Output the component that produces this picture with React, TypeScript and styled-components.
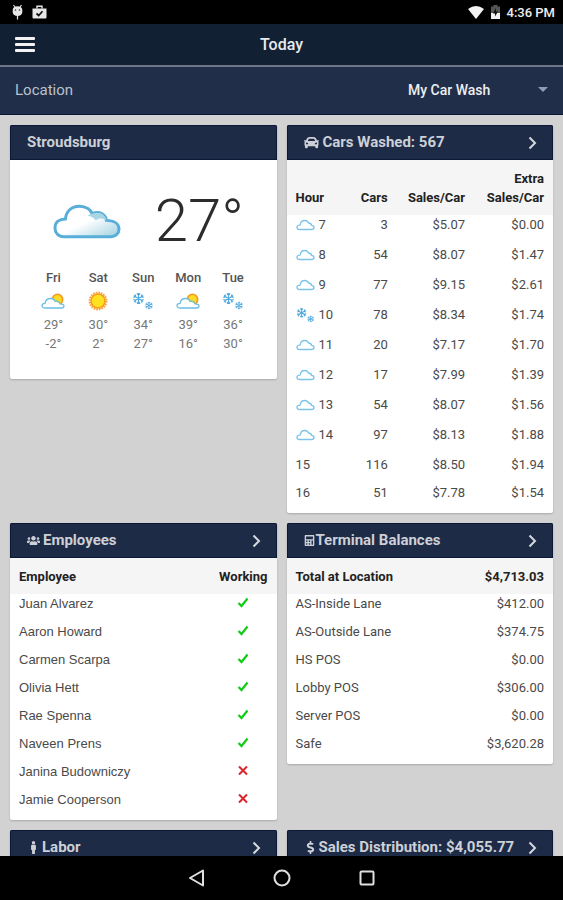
import React from "react";
import styled, { createGlobalStyle } from "styled-components";
import { FaCar, FaUsers, FaCalculator, FaMale, FaDollarSign } from "react-icons/fa";

const GlobalStyle = createGlobalStyle`
  * { box-sizing: border-box; }
  body { margin: 0; background: #000; font-family: Roboto, "Liberation Sans", sans-serif; color: #4a4a4a; }
`;

const Screen = styled.div`
  display: flex;
  flex-direction: column;
  height: 100vh;
`;

const StatusBar = styled.div`
  display: flex;
  flex: none;
  align-items: center;
  justify-content: space-between;
  height: 24px;
  padding: 0 8px 0 12px;
  background: #000;
  color: #eee;
  font-size: 13px;
  font-weight: 500;
`;

const StatusGroup = styled.div<{ $gap: number }>`
  display: flex;
  align-items: center;
  gap: ${(p) => p.$gap}px;
`;

const TitleBar = styled.header`
  display: grid;
  flex: none;
  grid-template-columns: 50px 1fr 50px;
  align-items: center;
  height: 43px;
  background: #122033;
  border-bottom: 2px solid #6c7686;
`;

const MenuButton = styled.button`
  display: flex;
  flex-direction: column;
  gap: 3px;
  width: 50px;
  padding: 12px 15px;
  border: 0;
  background: none;
`;

const MenuLine = styled.span`
  height: 3px;
  border-radius: 1px;
  background: #f2f2f2;
`;

const PageTitle = styled.h1`
  margin: 0;
  color: #e8eaed;
  font-size: 16px;
  font-weight: 500;
  line-height: 20px;
  text-align: center;
`;

const LocationBar = styled.div`
  display: flex;
  flex: none;
  align-items: center;
  justify-content: space-between;
  height: 48px;
  padding: 0 15px 2px;
  background: #202e4a;
  border-bottom: 1px solid #0b1433;
`;

const LocationLabel = styled.label`
  color: #bcc1ca;
  font-size: 15px;
`;

const SelectWrap = styled.div`
  display: flex;
  align-items: center;
  position: relative;
`;

const LocationSelect = styled.select`
  appearance: none;
  padding: 8px 57px 8px 0;
  border: 0;
  background: none;
  color: #eceef1;
  font: 500 14px Roboto, sans-serif;
`;

const Caret = styled.svg`
  position: absolute;
  right: 0;
  pointer-events: none;
`;

const Dashboard = styled.main`
  display: grid;
  flex: 1;
  grid-template-columns: 1fr 1fr;
  grid-auto-rows: max-content;
  align-items: start;
  gap: 10px;
  min-height: 0;
  padding: 10px;
  overflow-y: auto;
  scrollbar-width: none;
  background: #d2d2d2;
`;

const Card = styled.section`
  min-width: 0;
  padding-bottom: 2px;
  overflow: hidden;
  border-radius: 2px;
  background: #fff;
  box-shadow: 0 1px 2px rgba(0, 0, 0, 0.2);
`;

const CardTitle = styled.h2`
  margin: 0;
  color: #cdd0d6;
  font-size: 15px;
  font-weight: 700;
  line-height: 35px;
`;

const CardHeading = styled.div`
  display: flex;
  align-items: center;
  height: 35px;
  padding: 0 15px 0 16px;
  background: #1d2b47;
  border: 1px solid #0d1738;
`;

const CardLink = styled(CardHeading).attrs({ as: "a" })<{ href: string }>`
  color: #cdd0d6;
  text-decoration: none;
`;

const IconSlot = styled.span<{ $gap: number }>`
  display: flex;
  margin-right: ${(p) => p.$gap}px;
`;

const Chevron = styled.svg`
  margin-left: auto;
`;

const Table = styled.table`
  width: 100%;
  border-collapse: collapse;
  table-layout: fixed;
  font-size: 13px;
`;

const Th = styled.th<{ $width?: string; $align?: string }>`
  width: ${(p) => p.$width ?? "auto"};
  padding: 9px 0 8px;
  background: #f5f5f5;
  color: #222;
  font-weight: 700;
  line-height: 19px;
  text-align: ${(p) => p.$align ?? "left"};
  vertical-align: bottom;
  &:first-child { padding-left: 9px; }
  &:last-child { padding-right: 9px; }
`;

const Td = styled.td<{ $align?: string; $tall?: boolean; $name?: boolean }>`
  height: ${(p) => (p.$tall ? 30 : 28)}px;
  padding: 0 0 8px;
  color: #4a4a4a;
  font-family: ${(p) => (p.$name ? '"Liberation Sans", sans-serif' : "inherit")};
  line-height: 20px;
  text-align: ${(p) => p.$align ?? "left"};
  vertical-align: top;
  &:first-child { padding-left: 9px; }
  &:last-child { padding-right: 9px; }
`;

const Mark = styled.svg`
  display: block;
  margin: 3px 19px 0 auto;
`;

const HourCell = styled.span`
  display: flex;
  align-items: center;
  gap: 4px;
`;

const WeatherNow = styled.div`
  display: grid;
  grid-template-columns: 1fr 1fr;
  place-items: center;
  padding: 31px 21px 17px;
`;

const Temperature = styled.div`
  color: #2c2c2c;
  font-size: 60px;
  font-weight: 300;
  line-height: 60px;
`;

const Forecast = styled.div`
  display: grid;
  grid-template-columns: repeat(5, 1fr);
  padding: 0 21px 24px;
`;

const Day = styled.div`
  display: flex;
  flex-direction: column;
  align-items: center;
  font-size: 13px;
  line-height: 19px;
`;

const DayName = styled.div`
  color: #555;
  font-weight: 500;
`;

const DayIcon = styled.div`
  display: flex;
  align-items: center;
  height: 28px;
`;

const DayTemp = styled.div`
  color: #777;
`;

const NavBar = styled.nav`
  display: flex;
  flex: none;
  align-items: center;
  justify-content: center;
  gap: 68px;
  height: 44px;
  background: #000;
`;

const NavButton = styled.button`
  display: flex;
  padding: 0;
  border: 0;
  background: none;
`;

const CLOUD = "M14 44C6 44 2 38 2 32C2 24 8 20 16 20C17 10 24 3 35 3C44 3 50 8 52 13C62 9 70 14 71 22C82 22 88 27 88 34C88 40 83 44 77 44Z";

const BigCloud = () => (
  <svg width="68" height="35" viewBox="0 0 90 47" aria-label="Cloudy">
    <defs>
      <linearGradient id="cloudShade" x1="0" y1="0" x2="1" y2="1">
        <stop offset="0.5" stopColor="#fff" />
        <stop offset="1" stopColor="#9fcfe0" />
      </linearGradient>
    </defs>
    <path d={CLOUD} fill="url(#cloudShade)" stroke="#58aed8" strokeWidth="4" />
    <path d="M46 16C49 13 50 13 52 13C62 9 70 14 71 22C67 19 61 18 57 22C54 18 50 16 46 16Z" fill="#a8d5e4" />
  </svg>
);

const SmallCloud = () => (
  <svg width="19" height="12" viewBox="0 0 19 12" aria-label="Cloudy">
    <path d="M3.5 10.5C1.800 10.500 1 9.500 1 8.300C1 7 2.200 6.200 4 6.200C4.500 3.500 6 1.500 8.500 1.500C10.500 1.500 12 2.500 12.600 4C14.500 4 15.300 5 15.500 6.300C17.200 6.300 18 7.300 18 8.500C18 9.700 17 10.500 15.500 10.500Z" fill="#fff" stroke="#7cc4ea" strokeWidth="1.300" />
  </svg>
);

const Sun = () => (
  <svg width="20" height="20" viewBox="0 0 20 20" aria-label="Sunny">
    <circle cx="10" cy="10" r="8.400" fill="none" stroke="#f7a540" strokeWidth="2" strokeDasharray="1.700 0.940" />
    <circle cx="10" cy="10" r="7" fill="#ffe21f" stroke="#f59a23" strokeWidth="1.600" />
  </svg>
);

const PartlyCloudy = () => (
  <svg width="24" height="17" viewBox="0 0 24 17" aria-label="Partly cloudy">
    <circle cx="16.500" cy="6.500" r="5.200" fill="#fddb25" stroke="#f59a23" strokeWidth="1.600" />
    <path d="M4 15C2 15 1 14 1 12.600C1 11 2.200 10.300 4 10.300C4.500 7.500 6.500 5.500 9.500 5.500C12 5.500 13.700 6.800 14.200 8.500C16.500 7.800 18.500 8.800 19 10.800C21.500 10.800 23 11.800 23 13.100C23 14.200 22 15 20.500 15Z" fill="#fff" stroke="#6bbfe4" strokeWidth="1.300" />
    <path d="M13.800 8.500C16.500 7.800 18.500 8.800 19 10.800" fill="none" stroke="#8bc8a0" strokeWidth="1.300" />
  </svg>
);

const FLAKE = "M0-5V5M-4.300-2.500L4.300 2.500M-4.300 2.500L4.300-2.500M-1.500-4.500L0-3L1.500-4.500M-1.500 4.500L0 3L1.500 4.500M-4.700-.9L-2.600-1.500L-3.200-3.600M4.700.9L2.600 1.500L3.200 3.600M-4.700.9L-2.600 1.500L-3.200 3.600M4.700-.9L2.600-1.500L3.200-3.600";

const Snow = ({ width }: { width: number }) => (
  <svg width={width} height={Math.round(width * 0.82)} viewBox="0 0 22 18" aria-label="Snow" fill="none" stroke="#50a9dc">
    <path d={FLAKE} transform="translate(6.500 6.500) scale(1.100)" strokeWidth="1.100" />
    <path d={FLAKE} transform="translate(17 13.500) scale(.75)" strokeWidth="1.300" />
  </svg>
);

const Check = () => (
  <Mark width="12" height="11" viewBox="0 0 12 11" role="img" aria-label="Working">
    <path d="M1.500 6L4.500 9L10.500 1.500" fill="none" stroke="#12cc18" strokeWidth="2.200" />
  </Mark>
);

const Cross = () => (
  <Mark width="12" height="11" viewBox="0 0 12 11" role="img" aria-label="Not working">
    <path d="M2 1.500L10 9.500M10 1.500L2 9.500" fill="none" stroke="#d8262c" strokeWidth="2" />
  </Mark>
);

type HeadingProps = { title: string; href: string; icon: React.ReactNode; gap: number };

const LinkHeading = ({ title, href, icon, gap }: HeadingProps) => (
  <CardLink href={href}>
    <IconSlot $gap={gap}>{icon}</IconSlot>
    <CardTitle>{title}</CardTitle>
    <Chevron width="9" height="14" viewBox="0 0 9 14" aria-hidden="true">
      <path d="M1.500 1.500L7 7L1.500 12.500" fill="none" stroke="#d5d8dd" strokeWidth="2" />
    </Chevron>
  </CardLink>
);

const forecast = [
  { day: "Fri", icon: <PartlyCloudy />, high: "29°", low: "-2°" },
  { day: "Sat", icon: <Sun />, high: "30°", low: "2°" },
  { day: "Sun", icon: <Snow width={22} />, high: "34°", low: "27°" },
  { day: "Mon", icon: <PartlyCloudy />, high: "39°", low: "16°" },
  { day: "Tue", icon: <Snow width={22} />, high: "36°", low: "30°" },
];

const hours = [
  { hour: 7, sky: "cloud", cars: 3, sales: "$5.07", extra: "$0.00" },
  { hour: 8, sky: "cloud", cars: 54, sales: "$8.07", extra: "$1.47" },
  { hour: 9, sky: "cloud", cars: 77, sales: "$9.15", extra: "$2.61" },
  { hour: 10, sky: "snow", cars: 78, sales: "$8.34", extra: "$1.74" },
  { hour: 11, sky: "cloud", cars: 20, sales: "$7.17", extra: "$1.70" },
  { hour: 12, sky: "cloud", cars: 17, sales: "$7.99", extra: "$1.39" },
  { hour: 13, sky: "cloud", cars: 54, sales: "$8.07", extra: "$1.56" },
  { hour: 14, sky: "cloud", cars: 97, sales: "$8.13", extra: "$1.88" },
  { hour: 15, sky: "", cars: 116, sales: "$8.50", extra: "$1.94" },
  { hour: 16, sky: "", cars: 51, sales: "$7.78", extra: "$1.54" },
];

const employees: [string, boolean][] = [
  ["Juan Alvarez", true],
  ["Aaron Howard", true],
  ["Carmen Scarpa", true],
  ["Olivia Hett", true],
  ["Rae Spenna", true],
  ["Naveen Prens", true],
  ["Janina Budowniczy", false],
  ["Jamie Cooperson", false],
];

const balances = [
  ["AS-Inside Lane", "$412.00"],
  ["AS-Outside Lane", "$374.75"],
  ["HS POS", "$0.00"],
  ["Lobby POS", "$306.00"],
  ["Server POS", "$0.00"],
  ["Safe", "$3,620.28"],
];

export default function App() {
  return (
    <Screen>
      <GlobalStyle />
      <StatusBar>
        <StatusGroup $gap={9}>
          <svg width="11" height="16" viewBox="0 0 11 16" aria-hidden="true">
            <path d="M1.500 1L3 3M9.500 1L8 3M5.500 11V15.500" stroke="#e6e6e6" strokeWidth="1.200" />
            <path d="M.7 6C.7 3.500 2.500 2.200 5.500 2.200S10.300 3.500 10.300 6V8C10.300 10.500 8 12 5.500 12S.7 10.500.7 8Z" fill="#e6e6e6" />
            <circle cx="3.500" cy="6" r=".8" fill="#333" />
            <circle cx="7.500" cy="6" r=".8" fill="#333" />
          </svg>
          <svg width="15" height="14" viewBox="0 0 15 14" aria-hidden="true">
            <path d="M.5 3.500H14.500V12.500Q14.500 13.500 13.500 13.500H1.500Q.5 13.500.5 12.500Z" fill="#e6e6e6" />
            <path d="M5 3.500V1.200H10V3.500" fill="none" stroke="#e6e6e6" strokeWidth="1.400" />
            <path d="M4.500 8.500L6.700 10.500L10.500 6.300" fill="none" stroke="#111" strokeWidth="1.700" />
          </svg>
        </StatusGroup>
        <StatusGroup $gap={7}>
          <svg width="16" height="13" viewBox="0 0 16 13" aria-hidden="true">
            <path d="M0 3Q8-3 16 3L8 13Z" fill="#f2f2f2" />
          </svg>
          <svg width="9" height="14" viewBox="0 0 9 14" aria-hidden="true">
            <path d="M0 1.500H2.500V0H6.500V1.500H9V14H0Z" fill="#555" />
            <path d="M0 8H9V14H0Z" fill="#f2f2f2" />
            <path d="M5 3L2 8.500H4V11.500L7 6.500H5Z" fill="#111" />
          </svg>
          <span>4:36 PM</span>
        </StatusGroup>
      </StatusBar>
      <TitleBar>
        <MenuButton aria-label="Menu">
          <MenuLine />
          <MenuLine />
          <MenuLine />
        </MenuButton>
        <PageTitle>Today</PageTitle>
      </TitleBar>
      <LocationBar>
        <LocationLabel htmlFor="location">Location</LocationLabel>
        <SelectWrap>
          <LocationSelect id="location">
            <option>My Car Wash</option>
          </LocationSelect>
          <Caret width="10" height="5" viewBox="0 0 10 5" aria-hidden="true">
            <path d="M0 0H10L5 5Z" fill="#8f9db0" />
          </Caret>
        </SelectWrap>
      </LocationBar>
      <Dashboard>
        <Card>
          <CardHeading>
            <CardTitle>Stroudsburg</CardTitle>
          </CardHeading>
          <WeatherNow>
            <BigCloud />
            <Temperature>27°</Temperature>
          </WeatherNow>
          <Forecast>
            {forecast.map((d) => (
              <Day key={d.day}>
                <DayName>{d.day}</DayName>
                <DayIcon>{d.icon}</DayIcon>
                <DayTemp>{d.high}</DayTemp>
                <DayTemp>{d.low}</DayTemp>
              </Day>
            ))}
          </Forecast>
        </Card>
        <Card>
          <LinkHeading title="Cars Washed: 567" href="#cars" icon={<FaCar size={15} />} gap={4} />
          <Table>
            <thead>
              <tr>
                <Th $width="21%">Hour</Th>
                <Th $width="17%" $align="right">Cars</Th>
                <Th $width="29%" $align="right">Sales/Car</Th>
                <Th $width="33%" $align="right">Extra<br />Sales/Car</Th>
              </tr>
            </thead>
            <tbody>
              {hours.map((h) => (
                <tr key={h.hour}>
                  <Td $tall={!!h.sky}>
                    <HourCell>
                      {h.sky === "cloud" && <SmallCloud />}
                      {h.sky === "snow" && <Snow width={19} />}
                      {h.hour}
                    </HourCell>
                  </Td>
                  <Td $align="right">{h.cars}</Td>
                  <Td $align="right">{h.sales}</Td>
                  <Td $align="right">{h.extra}</Td>
                </tr>
              ))}
            </tbody>
          </Table>
        </Card>
        <Card>
          <LinkHeading title="Employees" href="#employees" icon={<FaUsers size={13} />} gap={3} />
          <Table>
            <thead>
              <tr>
                <Th>Employee</Th>
                <Th $width="35%" $align="right">Working</Th>
              </tr>
            </thead>
            <tbody>
              {employees.map(([name, working]) => (
                <tr key={name}>
                  <Td $name>{name}</Td>
                  <Td>{working ? <Check /> : <Cross />}</Td>
                </tr>
              ))}
            </tbody>
          </Table>
        </Card>
        <Card>
          <LinkHeading title="Terminal Balances" href="#balances" icon={<FaCalculator size={11} />} gap={1} />
          <Table>
            <thead>
              <tr>
                <Th>Total at Location</Th>
                <Th $width="35%" $align="right">$4,713.03</Th>
              </tr>
            </thead>
            <tbody>
              {balances.map(([name, amount]) => (
                <tr key={name}>
                  <Td>{name}</Td>
                  <Td $align="right">{amount}</Td>
                </tr>
              ))}
            </tbody>
          </Table>
        </Card>
        <Card>
          <LinkHeading title="Labor" href="#labor" icon={<FaMale size={13} />} gap={2} />
        </Card>
        <Card>
          <LinkHeading title="Sales Distribution: $4,055.77" href="#sales" icon={<FaDollarSign size={13} />} gap={2} />
        </Card>
      </Dashboard>
      <NavBar aria-label="System">
        <NavButton aria-label="Back">
          <svg width="17" height="18" viewBox="0 0 17 18"><path d="M15 1.500V16.500L2 9Z" fill="none" stroke="#e0e0e0" strokeWidth="2" strokeLinejoin="round" /></svg>
        </NavButton>
        <NavButton aria-label="Home">
          <svg width="18" height="18" viewBox="0 0 18 18"><circle cx="9" cy="9" r="7.500" fill="none" stroke="#e0e0e0" strokeWidth="2" /></svg>
        </NavButton>
        <NavButton aria-label="Overview">
          <svg width="16" height="16" viewBox="0 0 16 16"><rect x="1.500" y="1.500" width="13" height="13" rx="1" fill="none" stroke="#e0e0e0" strokeWidth="2" /></svg>
        </NavButton>
      </NavBar>
    </Screen>
  );
}
